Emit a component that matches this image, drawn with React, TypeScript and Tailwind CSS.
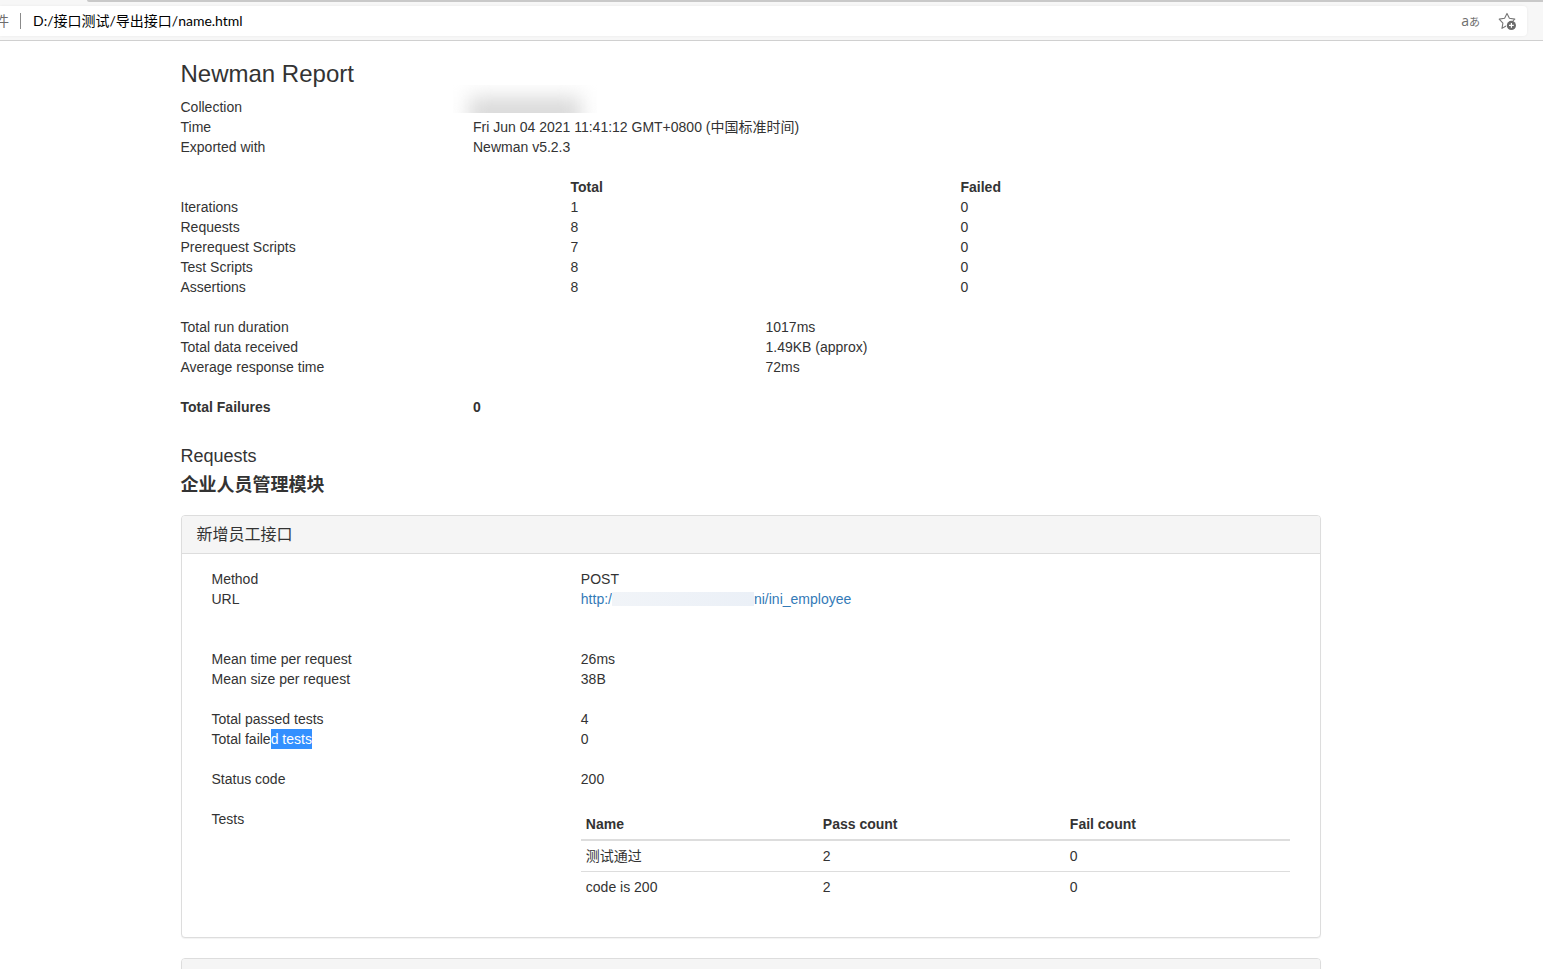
import type { ReactNode } from "react";

type Row = { label: string; value?: ReactNode; selected?: string };

const counts = [
    { name: "Iterations", total: 1, failed: 0 },
    { name: "Requests", total: 8, failed: 0 },
    { name: "Prerequest Scripts", total: 7, failed: 0 },
    { name: "Test Scripts", total: 8, failed: 0 },
    { name: "Assertions", total: 8, failed: 0 },
];

const timings: Row[] = [
    { label: "Total run duration", value: "1017ms" },
    { label: "Total data received", value: "1.49KB (approx)" },
    { label: "Average response time", value: "72ms" },
];

const tests = [
    { name: "测试通过", pass: 2, fail: 0 },
    { name: "code is 200", pass: 2, fail: 0 },
];

const StarPlusIcon = () => (
    <svg width="20" height="20" viewBox="0 0 20 20" fill="none" aria-hidden="true">
        <path
            d="M7.6 15.2 4 17.4l.9-5.3L1.2 8.1l5.4-.9L9 2.4l2.4 4.8 5.4.9-1.6 1.6"
            stroke="#777"
            strokeWidth="1.1"
            strokeLinejoin="round"
            strokeLinecap="round"
        />
        <circle cx="13.4" cy="14.4" r="4.6" fill="#6a6a6a" />
        <path d="M13.4 12v4.8M11 14.4h4.8" stroke="#fff" strokeWidth="1.2" />
    </svg>
);

const AddressBar = () => (
    <header className="bg-[#f7f7f7] border-b border-[#d0d0d0] font-[Lato,'Noto_Sans_CJK_SC',sans-serif]">
        <div className="h-0.5 ml-[87px] bg-[#c9c9c9] rounded-bl-sm"></div>
        <div className="mt-1 mb-1 mr-4 h-[30px] flex items-center bg-white rounded-r shadow-[0_0_3px_rgba(0,0,0,0.06)] overflow-hidden">
            <span className="w-5 shrink-0 flex justify-end pr-[11px] text-sm text-[#6e6e6e]">件</span>
            <span className="w-px h-4 shrink-0 bg-[#8a8a8a]"></span>
            <input
                aria-label="Address"
                className="flex-1 min-w-0 ml-3 text-sm text-black bg-transparent outline-none"
                defaultValue="D:/接口测试/导出接口/name.html"
            />
            <button aria-label="Translate" className="flex items-baseline leading-5 text-[#6e6e6e] font-['Open_Sans','Noto_Sans_CJK_JP',sans-serif]">
                <span className="text-sm leading-5">a</span>
                <span className="text-[11px] leading-5">あ</span>
            </button>
            <button aria-label="Add to favorites" className="ml-[18px] mr-[9px]">
                <StarPlusIcon />
            </button>
        </div>
    </header>
);

const Details = ({ rows, columns }: { rows: Row[]; columns: string }) => (
    <dl className="mb-5 -mr-[30px]">
        {rows.map(({ label, value, selected }) => (
            <div key={label} className={`grid ${columns}`}>
                <dt>
                    {label}
                    {selected && <span className="inline-block bg-[#3390ff] text-white">{selected}</span>}
                </dt>
                <dd>{value}</dd>
            </div>
        ))}
    </dl>
);

const HiddenName = () => (
    <span className="relative block">
        <span className="absolute -left-5 -top-3 w-36 h-7 overflow-hidden">
            <span className="absolute left-4 top-3 w-28 h-8 bg-[#d9d9d9] blur-[10px]"></span>
        </span>
    </span>
);

const meta: Row[] = [
    { label: "Collection", value: <HiddenName /> },
    { label: "Time", value: "Fri Jun 04 2021 11:41:12 GMT+0800 (中国标准时间)" },
    { label: "Exported with", value: "Newman v5.2.3" },
];

const Summary = () => (
    <section>
        <h3 className="mt-5 mb-2.5 text-2xl leading-[26px]">Newman Report</h3>
        <Details rows={meta} columns="grid-cols-[1fr_3fr]" />
        <div className="-mr-[30px]">
            <table className="w-full mb-5 table-fixed text-left">
                <thead>
                    <tr>
                        <td className="p-0"></td>
                        <th className="p-0 font-bold">Total</th>
                        <th className="p-0 font-bold">Failed</th>
                    </tr>
                </thead>
                <tbody>
                    {counts.map((row) => (
                        <tr key={row.name}>
                            <th className="p-0 font-normal">{row.name}</th>
                            <td className="p-0">{row.total}</td>
                            <td className="p-0">{row.failed}</td>
                        </tr>
                    ))}
                </tbody>
            </table>
        </div>
        <Details rows={timings} columns="grid-cols-2" />
        <Details rows={[{ label: "Total Failures", value: 0 }]} columns="grid-cols-[1fr_3fr] font-bold" />
    </section>
);

const TestsTable = () => (
    <table className="w-full mb-5 table-fixed border-collapse text-left">
        <thead>
            <tr className="border-b-2 border-[#ddd]">
                <th className="w-[237px] p-[5px] font-bold">Name</th>
                <th className="w-[247px] p-[5px] font-bold">Pass count</th>
                <th className="p-[5px] font-bold">Fail count</th>
            </tr>
        </thead>
        <tbody>
            {tests.map((test) => (
                <tr key={test.name} className="border-t border-[#ddd]">
                    <td className="p-[5px]">{test.name}</td>
                    <td className="p-[5px]">{test.pass}</td>
                    <td className="p-[5px]">{test.fail}</td>
                </tr>
            ))}
        </tbody>
    </table>
);

const Panel = ({ title, children }: { title?: string; children?: ReactNode }) => (
    <article className="mb-5 border border-[#ddd] rounded bg-white shadow-[0_1px_1px_rgba(0,0,0,0.05)]">
        <div className="px-[15px] py-2.5 min-h-[38px] bg-[#f5f5f5] border-b border-[#ddd] rounded-t-[3px]">
            <h4 className="text-base leading-[17px]">{title}</h4>
        </div>
        {children}
    </article>
);

const RequestUrl = () => (
    <a href="#employee" className="flex items-center text-[#337ab7]">
        http:/
        <span className="w-[142px] h-3.5 bg-gradient-to-r from-[#f1f4f8] to-[#ebf0f7]"></span>
        ni/ini_employee
    </a>
);

const RequestPanel = () => {
    const columns = "grid-cols-[1fr_2fr]";

    return (
        <Panel title="新增员工接口">
            <div className="px-[30px] py-[15px]">
                <Details rows={[{ label: "Method", value: "POST" }, { label: "URL", value: <RequestUrl /> }]} columns={columns} />
                <div className="pt-5">
                    <Details
                        rows={[
                            { label: "Mean time per request", value: "26ms" },
                            { label: "Mean size per request", value: "38B" },
                        ]}
                        columns={columns}
                    />
                </div>
                <Details
                    rows={[
                        { label: "Total passed tests", value: 4 },
                        { label: "Total faile", selected: "d tests", value: 0 },
                    ]}
                    columns={columns}
                />
                <Details rows={[{ label: "Status code", value: 200 }]} columns={columns} />
                <div className="grid grid-cols-[1fr_2fr] -mr-[30px]">
                    <div>Tests</div>
                    <div className="pr-[30px]">
                        <TestsTable />
                    </div>
                </div>
            </div>
        </Panel>
    );
};

const App = () => {
    return (
        <div className="h-screen overflow-hidden bg-white">
            <AddressBar />
            <div className="pr-[42px]">
                <main className="flow-root max-w-[1170px] mx-auto px-[15px] text-sm leading-5 text-[#333] font-['Liberation_Sans','Noto_Sans_CJK_SC',sans-serif]">
                    <Summary />
                    <section className="pt-[9px]">
                        <h4 className="mb-[9px] text-lg leading-5">Requests</h4>
                        <h4 className="mb-5 text-lg leading-5 font-bold">企业人员管理模块</h4>
                        <RequestPanel />
                        <Panel />
                    </section>
                </main>
            </div>
        </div>
    );
};

export default App;
